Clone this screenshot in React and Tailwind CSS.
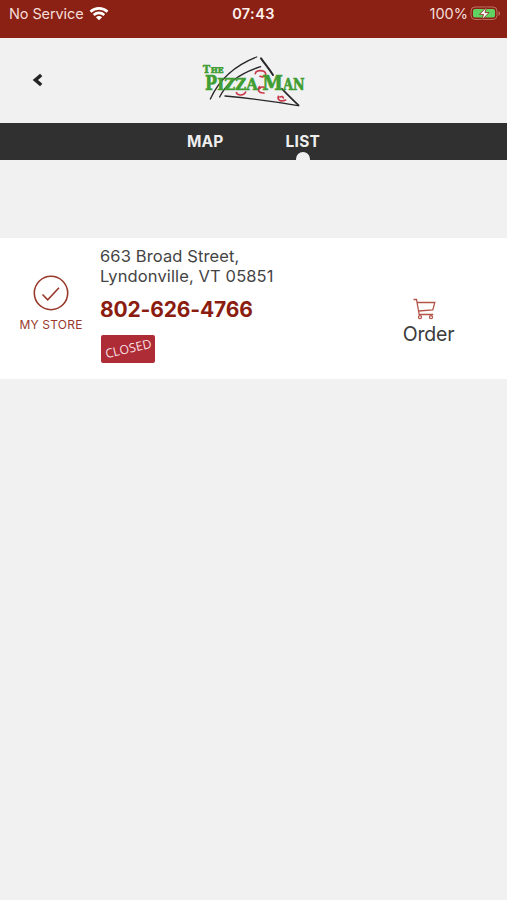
const StatusBar = () => (
  <div className="relative flex h-[38px] items-start justify-between bg-[#8a2114] pl-[9px] pr-[6px] pt-[4px] text-[14.5px] leading-[20px] text-[#f6ded9]">
    <div className="flex items-center">
      <span className="tracking-[-0.1px]">No Service</span>
      <svg className="ml-[5px] h-[14px] w-[20px]" viewBox="0 0 20 14" fill="none" stroke="#fff" strokeWidth="2.6">
        <path d="M1.5 4.700C6.300.2 13.700.2 18.500 4.700" />
        <path d="M4.700 8c3-2.800 7.600-2.800 10.600 0" />
        <path d="M10 13.200 6.900 10.200c1.800-1.600 4.400-1.600 6.200 0z" fill="#fff" stroke="none" />
      </svg>
    </div>
    <span className="absolute left-1/2 -translate-x-1/2 font-semibold tracking-[0.400px] text-[#fff0ed]">07:43</span>
    <div className="flex items-center">
      <span>100%</span>
      <svg className="ml-[2px] h-[15px] w-[31px] -translate-y-px" viewBox="0 0 31 15">
        <rect x="1" y="1" width="26" height="12.5" rx="4" fill="none" stroke="#bd7163" />
        <rect x="3" y="3" width="22" height="8.5" rx="2" fill="#5fd463" />
        <path d="M28.5 5v5c2-.7 2-4.300 0-5z" fill="#bd7163" />
        <path d="m16.500 1.200-7 7.200h4l-1.500 5.400 7-7.200h-4z" fill="#fff" stroke="#8a2114" strokeWidth=".8" />
      </svg>
    </div>
  </div>
);

const logoLetters = [
  { text: 'T', x: 24, y: 71, size: 31, width: 21 },
  { text: 'HE', x: 47, y: 71, size: 23, width: 38 },
  { text: 'P', x: 30, y: 124, size: 61, width: 36 },
  { text: 'IZZA', x: 67, y: 124, size: 48, width: 122 },
  { text: 'M', x: 202, y: 124, size: 61, width: 62 },
  { text: 'AN', x: 265, y: 124, size: 48, width: 64 },
];

const Logo = () => (
  <svg className="h-[64px] w-[120px]" viewBox="0 0 360 192" fill="none">
    <g stroke="#29262a" strokeLinecap="round">
      <path d="M46 150C67 104 110 53 185 24" strokeWidth="4" />
      <path d="M74 144c19-40 54-69 123-91" strokeWidth="4" />
      <path d="M198 28c14 20 25 32 36 50" strokeWidth="6" />
      <path d="M260 119c17 17 32 33 51 50" strokeWidth="5" />
      <path d="M90 141c65 6 145 16 219 29" strokeWidth="4" />
    </g>
    <g stroke="#c93a4c" strokeWidth="5" strokeLinecap="round">
      <path d="M181 74c2-12 28-12 31 0 1 8-8 12-17 8" />
      <path d="M194 113c-8 8-4 20 13 19M194 119c3-5 10-6 14-4" />
      <path d="M124 131c5 10 23 9 28-2" />
      <path d="M250 142c-4 12 9 17 22 11M255 144c5-3 9-1 10 3" />
    </g>
    <g fill="#3f9d32" stroke="#3f9d32" strokeWidth="2" fontFamily="'DejaVu Serif', serif" fontWeight="700">
      {logoLetters.map(({ text, x, y, size, width }) => (
        <text key={text} x={x} y={y} fontSize={size} textLength={width} lengthAdjust="spacingAndGlyphs">
          {text}
        </text>
      ))}
    </g>
  </svg>
);

const Header = () => (
  <header className="grid h-[85px] grid-cols-[195px_120px_1fr] items-center bg-[#f1f1f1]">
    <button className="ml-[32px] w-[12px]" aria-label="Back">
      <svg className="h-[14px] w-[12px] -translate-y-px" viewBox="0 0 12 14" fill="none" stroke="#242424" strokeWidth="3.500">
        <path d="M9.200 2 3.400 7l5.800 5" />
      </svg>
    </button>
    <Logo />
  </header>
);

const Tabs = () => (
  <nav className="flex h-[37px] justify-center gap-[62px] overflow-hidden bg-[#303030] text-[15.500px] font-bold leading-[37px] text-[#eeeeee]">
    <button className="tracking-[0.2px]">MAP</button>
    <button className="relative tracking-[0.2px]">
      LIST
      <span className="absolute -bottom-[6px] left-1/2 h-[14px] w-[14px] -translate-x-1/2 rounded-full bg-[#f1f1f1]" />
    </button>
  </nav>
);

const StoreCard = () => (
  <section className="mt-[78px] flex h-[141px] bg-white">
    <div className="flex w-[102px] flex-col items-center pt-[37px] text-[#98392c]">
      <svg className="h-[36px] w-[36px]" viewBox="0 0 36 36" fill="none" stroke="currentColor" strokeWidth="1.600">
        <circle cx="18" cy="18" r="16.700" />
        <path d="m9.500 19.500 5.200 5.300L26 12.800" />
      </svg>
      <span className="mt-[5px] text-[12px] leading-[18px] tracking-[0.2px]">MY STORE</span>
    </div>
    <div className="-ml-[2px] w-[280px] pt-[8px]">
      <p className="text-[16.500px] leading-[20px] tracking-[0.120px] text-[#444]">
        663 Broad Street,
        <br />
        Lyndonville, VT 05851
      </p>
      <p className="mt-[11px] text-[21px] font-bold leading-[26px] tracking-[-0.150px] text-[#8a1c10]">802-626-4766</p>
      <div className="ml-[1px] mt-[12px] flex h-[28px] w-[54px] items-center justify-center rounded-[2px] bg-[#ad2c35]">
        <span className="-rotate-[13deg] font-['Open_Sans',sans-serif] text-[12.500px] leading-none text-[#f8dfe0]">CLOSED</span>
      </div>
    </div>
    <div className="flex w-[97px] flex-col items-center pt-[60px]">
      <svg className="-ml-[8px] h-[22px] w-[23px]" viewBox="0 0 23 22" fill="none" stroke="#b4554a" strokeWidth="1.300">
        <path d="M.5 1.500h3L6.200 16.500h14M4.200 4.500h17.600l-2 7.500-14.200 1" />
        <circle cx="7" cy="19.200" r="1.500" />
        <circle cx="18" cy="19.200" r="1.500" />
      </svg>
      <span className="mt-px text-[19.500px] leading-[27px] tracking-[-0.200px] text-[#3b3b3b]">Order</span>
    </div>
  </section>
);

const App = () => (
  <div className="min-h-screen w-full bg-[#f1f1f1] font-['Inter',sans-serif]">
    <StatusBar />
    <Header />
    <Tabs />
    <StoreCard />
  </div>
);

export default App;
